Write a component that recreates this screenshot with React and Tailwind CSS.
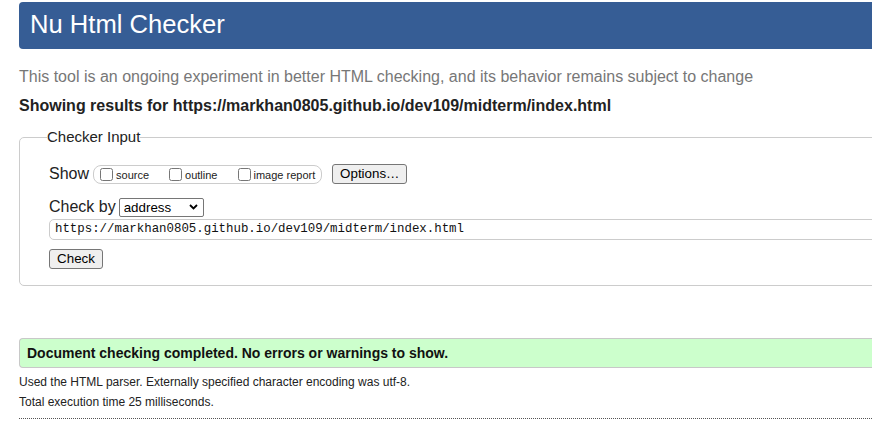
import React from "react";

export default function App() {
  return (
    <div className="w-[872px] h-[432px] overflow-hidden bg-white" style={{ fontFamily: '"Liberation Sans", Arial, sans-serif' }}>
      <div className="pl-[19px] w-[1100px] flex flex-col">
        <h1 className="mt-[2px] h-[47px] rounded-[4px] bg-[#365d95] text-white text-[25.6px] font-normal flex items-center pl-[11px] pb-[2px]">
          Nu Html Checker
        </h1>
        <p className="mt-[19px] text-[16px] leading-[18px] text-[#777]">
          This tool is an ongoing experiment in better HTML checking, and its behavior remains subject to change
        </p>
        <p className="mt-[11px] text-[16px] leading-[18px] font-bold text-[#222]">
          Showing results for https://markhan0805.github.io/dev109/midterm/index.html
        </p>
        <fieldset className="mt-[13px] border border-[#ccc] rounded-[5px] pl-[29px] pr-[29px] pt-[18px] pb-[16px] min-w-0">
          <legend className="-ml-[2px] text-[15px] leading-[18px] text-[#222] p-0">Checker Input</legend>
          <div className="flex items-start h-[20px]">
            <span className="text-[16px] leading-[18px] text-[#222] mt-[1px]">Show</span>
            <div className="ml-[4px] mt-[1px] h-[19px] border border-[#ccc] rounded-[8px] flex items-center pl-[6px] pr-[6px] text-[11px] text-[#222]">
              <label className="flex items-center">
                <input type="checkbox" className="w-[13px] h-[13px] m-0" />
                <span className="ml-[3px] mt-[2px]">source</span>
              </label>
              <label className="flex items-center ml-[20px]">
                <input type="checkbox" className="w-[13px] h-[13px] m-0" />
                <span className="ml-[3px] mt-[2px]">outline</span>
              </label>
              <label className="flex items-center ml-[21px]">
                <input type="checkbox" className="w-[13px] h-[13px] m-0" />
                <span className="ml-[2px] mt-[2px]">image report</span>
              </label>
            </div>
            <button className="ml-[10px] h-[20px] w-[75px] bg-[#efefef] border border-[#767676] rounded-[3px] text-[13.33px] text-black flex items-center justify-center">
              Options…
            </button>
          </div>
          <div className="mt-[14px] flex items-start h-[19px]">
            <span className="text-[16px] leading-[18px] text-[#222]">Check by</span>
            <div className="relative ml-[3px] flex">
              <select className="block appearance-none w-[85px] h-[19px] border border-[#767676] rounded-[2px] bg-white text-[13.33px] text-black pl-[4px] leading-[17px]">
                <option>address</option>
              </select>
              <svg className="absolute right-[6px] top-[6px] pointer-events-none" width="9" height="6" viewBox="0 0 9 6">
                <path d="M1 1 L4.5 4.5 L8 1" fill="none" stroke="#000" strokeWidth="1.8" />
              </svg>
            </div>
          </div>
          <div className="mt-[2px] h-[21px] border border-[#ccc] rounded-l-[5px] flex items-center pl-[5px] text-[12.4px] text-[#111]" style={{ fontFamily: '"Liberation Mono", "DejaVu Sans Mono", monospace' }}>
            https://markhan0805.github.io/dev109/midterm/index.html
          </div>
          <div className="mt-[9px] flex">
            <button className="h-[20px] w-[54px] bg-[#efefef] border border-[#767676] rounded-[3px] text-[13.33px] text-black flex items-center justify-center">
              Check
            </button>
          </div>
        </fieldset>
        <div className="mt-[52px] h-[30px] bg-[#ccffcc] border-y border-l border-[#c8c8c8] rounded-l-[4px] flex items-center pl-[7px] text-[14px] font-bold text-[#111]">
          Document checking completed. No errors or warnings to show.
        </div>
        <p className="mt-[7px] text-[12px] leading-[14px] text-[#222]">
          Used the HTML parser. Externally specified character encoding was utf-8.
        </p>
        <p className="mt-[6px] text-[12px] leading-[14px] text-[#222]">
          Total execution time 25 milliseconds.
        </p>
        <div className="mt-[9px] border-t border-dotted border-[#555]" />
      </div>
    </div>
  );
}
